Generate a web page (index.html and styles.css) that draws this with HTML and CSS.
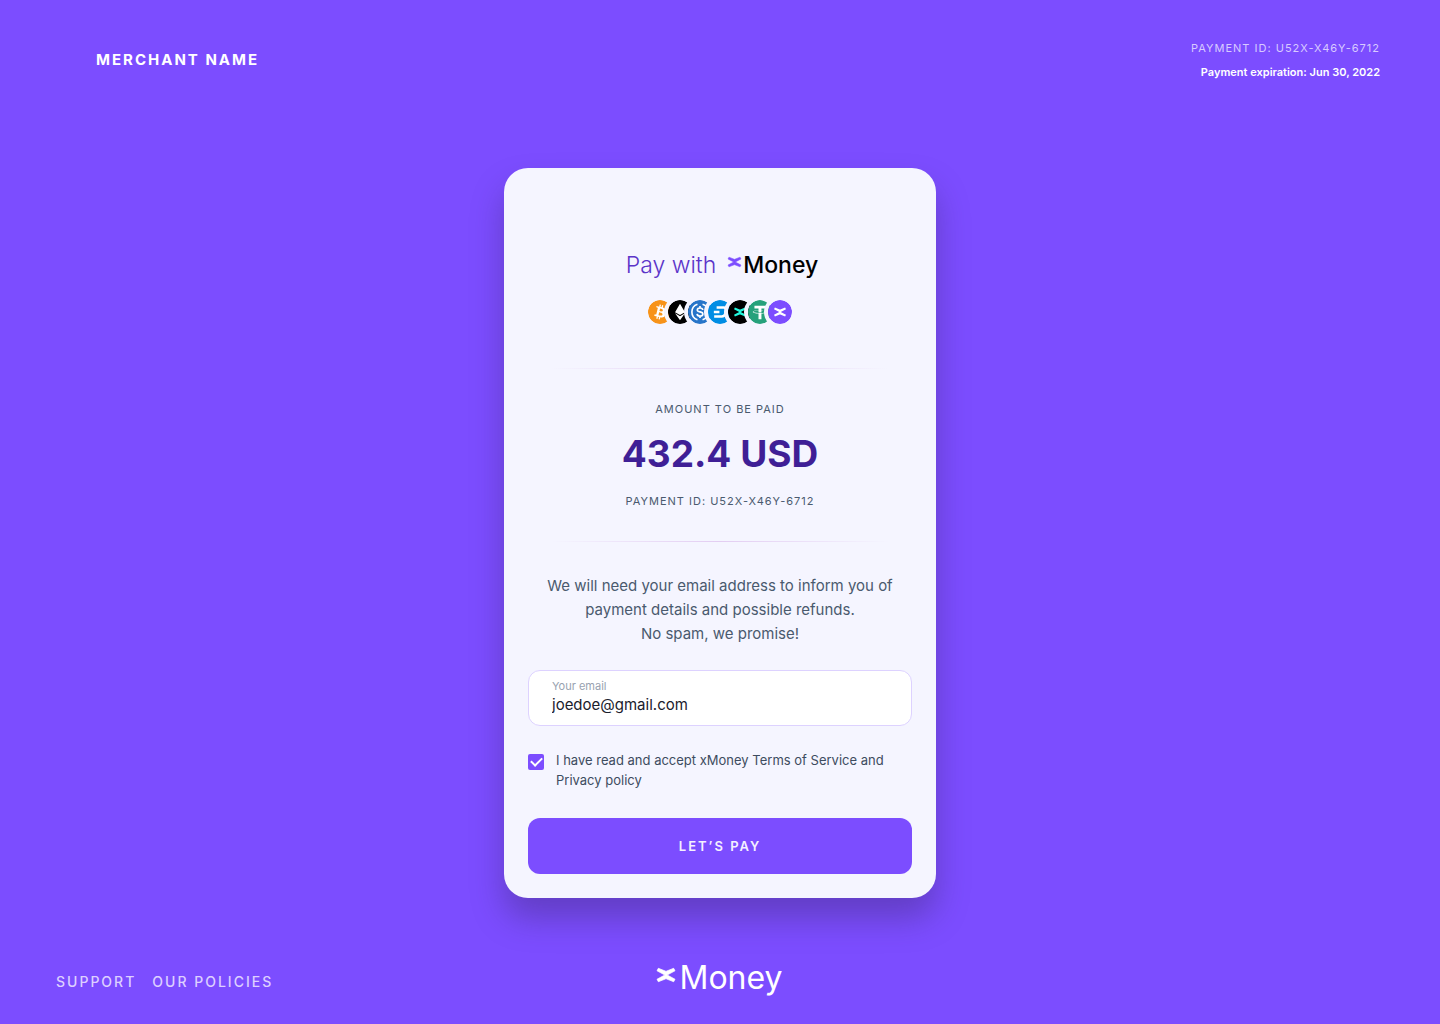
FILE: index.html
```html
<!DOCTYPE html>
<html lang="en">
<head>
<meta charset="utf-8">
<meta name="viewport" content="width=device-width, initial-scale=1">
<title>Pay with xMoney</title>
<link rel="stylesheet" href="styles.css">
</head>
<body>
<svg class="defs" aria-hidden="true">
  <symbol id="x-mark" viewBox="0 38 300 225">
    <path d="M169.8 150.7 300 80.2 278.1 38.8 155.7 86.8a15.1 15.1 0 0 1-11.1 0L22.2 38.8.3 80.2 130.5 150.7.3 221.2l21.9 41.4 122.4-48a15.1 15.1 0 0 1 11.1 0l122.4 48 21.9-41.4z"/>
  </symbol>
</svg>
<header class="header">
  <p class="merchant">MERCHANT NAME</p>
  <div class="meta">
    <p class="meta-id">PAYMENT ID: U52X-X46Y-6712</p>
    <p class="meta-expiry">Payment expiration: Jun 30, 2022</p>
  </div>
</header>

<main class="main">
  <form class="card">
    <h1 class="title">
      <span>Pay with</span>
      <span class="logo"><svg class="logo-mark"><use href="#x-mark"/></svg><span>Money</span></span>
    </h1>
    <ul class="coins">
      <li><svg class="coin" viewBox="0 0 32 32" role="img" aria-label="Bitcoin"><circle cx="16" cy="16" r="16" fill="#f7931a"/><path fill="#fff" d="M23.189 14.02c.314-2.096-1.283-3.223-3.465-3.975l.708-2.84-1.728-.43-.69 2.765c-.454-.114-.92-.22-1.385-.326l.695-2.783L15.596 6l-.708 2.839c-.376-.086-.746-.17-1.104-.26l.002-.009-2.384-.595-.46 1.846s1.283.294 1.256.312c.7.175.826.638.805 1.006l-.806 3.235c.048.012.11.03.18.057l-.183-.045-1.13 4.532c-.086.212-.303.531-.793.41.018.025-1.256-.313-1.256-.313l-.858 1.978 2.25.561c.418.105.828.215 1.231.318l-.715 2.872 1.727.43.708-2.84c.472.127.93.245 1.378.357l-.706 2.828 1.728.43.715-2.866c2.948.558 5.164.333 6.097-2.333.752-2.146-.037-3.385-1.588-4.192 1.13-.26 1.98-1.003 2.207-2.538zm-3.95 5.538c-.533 2.147-4.148.986-5.32.695l.95-3.805c1.172.293 4.929.872 4.37 3.11zm.535-5.569c-.487 1.953-3.495.96-4.47.717l.86-3.45c.975.243 4.118.696 3.61 2.733z"/></svg></li>
      <li><svg class="coin" viewBox="0 0 32 32" role="img" aria-label="Ethereum"><circle cx="16" cy="16" r="16"/><path fill="#fff" d="M16 5l-6.6 11.2L16 20l6.6-3.8zM16 21.5l-6.6-3.9L16 27l6.6-9.4z"/></svg></li>
      <li><svg class="coin" viewBox="0 0 32 32" role="img" aria-label="USD Coin"><circle cx="16" cy="16" r="16" fill="#2775c9"/><g fill="none" stroke="#fff" stroke-width="2.2"><path d="M12.6 5.6a11 11 0 0 0 0 20.8M19.4 5.6a11 11 0 0 1 0 20.8"/><path d="M19.7 13.3c-.2-1.9-1.6-2.7-3.7-2.7-2.2 0-3.6 1-3.6 2.6 0 3.8 7.4 1.6 7.4 5.5 0 1.7-1.5 2.7-3.8 2.7-2.3 0-3.8-1-3.9-2.9M16 8v3M16 21v3"/></g></svg></li>
      <li><svg class="coin" viewBox="0 0 32 32" role="img" aria-label="Dash"><circle cx="16" cy="16" r="16" fill="#008de4"/><path fill="none" stroke="#fff" stroke-width="3.4" stroke-linejoin="round" d="M11.5 10h9.3c3 0 4.1 1.6 3.4 4.2l-1 3.8c-.8 2.7-2.2 4-5 4H8.2M7.8 16h7.4"/></svg></li>
      <li><svg class="coin" viewBox="0 0 32 32" role="img" aria-label="MultiversX"><circle cx="16" cy="16" r="16"/><use href="#x-mark" x="8" y="10" width="16" height="12" fill="#23f7dd"/></svg></li>
      <li><svg class="coin" viewBox="0 0 32 32" role="img" aria-label="Tether"><circle cx="16" cy="16" r="16" fill="#26a17b"/><path fill="#fff" d="M17.922 17.383v-.002c-.11.008-.677.042-1.942.042-1.01 0-1.721-.03-1.971-.042v.003c-3.888-.171-6.79-.848-6.79-1.658 0-.809 2.902-1.486 6.79-1.66v2.644c.254.018.982.061 1.988.061 1.207 0 1.812-.05 1.925-.06v-2.643c3.88.173 6.775.85 6.775 1.658 0 .81-2.895 1.485-6.775 1.657m0-3.59v-2.366h5.414V7.819H8.595v3.608h5.414v2.365c-4.4.202-7.709 1.074-7.709 2.118 0 1.044 3.309 1.915 7.709 2.118v7.582h3.913v-7.584c4.393-.202 7.694-1.073 7.694-2.116 0-1.043-3.301-1.914-7.694-2.117"/></svg></li>
      <li><svg class="coin" viewBox="0 0 32 32" role="img" aria-label="xMoney"><circle cx="16" cy="16" r="16" fill="#7c4dff"/><use href="#x-mark" x="8" y="10" width="16" height="12" fill="#fff"/></svg></li>
    </ul>

    <section class="summary">
      <p class="label">AMOUNT TO BE PAID</p>
      <p class="amount">432.4 USD</p>
      <p class="label">PAYMENT ID: U52X-X46Y-6712</p>
    </section>

    <p class="note">We will need your email address to inform you of<br>payment details and possible refunds.<br>No spam, we promise!</p>

    <div class="field">
      <label for="email">Your email</label>
      <input id="email" type="email" value="joedoe@gmail.com">
    </div>

    <div class="consent">
      <input id="terms" type="checkbox" checked>
      <label for="terms">I have read and accept xMoney Terms of Service and<br>Privacy policy</label>
    </div>

    <button class="pay" type="button">LET’S PAY</button>
  </form>
</main>

<footer class="footer">
  <nav class="links">
    <a href="#support">SUPPORT</a>
    <a href="#policies">OUR POLICIES</a>
  </nav>
  <div class="logo logo-large"><svg class="logo-mark"><use href="#x-mark"/></svg><span>Money</span></div>
</footer>
</body>
</html>
```
FILE: styles.css
```css
* {
  box-sizing: border-box;
  margin: 0;
}

body {
  display: flex;
  flex-direction: column;
  min-height: 100vh;
  background: #7c4dff;
  color: #fff;
  font-family: Inter, "Liberation Sans", sans-serif;
}

.defs {
  display: none;
}

#x-mark {
  overflow: visible;
}

.header {
  display: flex;
  justify-content: space-between;
  align-items: center;
  padding: 36px 60px 0 96px;
}

.merchant {
  font-size: 15px;
  line-height: 24px;
  font-weight: 700;
  letter-spacing: 2px;
}

.meta {
  text-align: right;
  font-size: 11px;
  line-height: 24px;
}

.meta-id {
  color: #d8caff;
  letter-spacing: 1px;
}

.meta-expiry {
  font-weight: 600;
}

.main {
  flex: 1;
  display: flex;
  justify-content: center;
  align-items: flex-start;
  padding: 84px 24px 62px;
}

.card {
  display: flex;
  flex-direction: column;
  width: 100%;
  max-width: 432px;
  padding: 81px 24px 24px;
  border-radius: 24px;
  background: #f5f5ff;
  box-shadow: 0 20px 32px rgba(60, 40, 110, 0.4);
  color: #4a5a6e;
  text-align: center;
}

.title {
  display: flex;
  justify-content: center;
  align-items: center;
  gap: 12px;
  padding-left: 4px;
  color: #5b34c9;
  font-size: 23px;
  line-height: 32px;
  font-weight: 300;
}

.logo {
  display: flex;
  align-items: flex-start;
  gap: 2px;
  color: #000;
  font-size: 23px;
  line-height: 32px;
  font-weight: 500;
}

.logo-mark {
  width: 13px;
  height: 10px;
  margin-top: 8px;
  overflow: visible;
  fill: #7c4dff;
  stroke: #7c4dff;
  stroke-width: 12px;
}

.logo-large {
  gap: 4px;
  color: #fff;
  font-size: 32px;
  line-height: 36px;
  font-weight: 400;
}

.logo-large .logo-mark {
  width: 18px;
  height: 14px;
  fill: #fff;
  stroke: #fff;
}

.coins {
  display: flex;
  justify-content: center;
  margin-top: 19px;
  padding: 0;
  list-style: none;
}

.coins li + li {
  margin-left: -4px;
}

.coin {
  display: block;
  width: 24px;
  height: 24px;
  border-radius: 50%;
  box-shadow: 0 0 0 4px #f5f5ff;
}

.summary {
  margin-top: 44px;
}

.summary::before,
.summary::after {
  content: "";
  display: block;
  height: 1px;
  background: linear-gradient(90deg, transparent 6%, #e3cdf2 50%, transparent 94%);
}

.summary::before {
  margin-bottom: 28px;
}

.summary::after {
  margin-top: 28px;
}

.label {
  font-size: 11px;
  line-height: 24px;
  letter-spacing: 1px;
}

.amount {
  margin: 5px 0 7px;
  color: #3f1f96;
  font-size: 37px;
  line-height: 56px;
  font-weight: 700;
}

.note {
  margin-top: 32px;
  font-size: 15px;
  line-height: 24px;
}

.field {
  display: flex;
  flex-direction: column;
  height: 56px;
  margin-top: 24px;
  padding: 7px 23px;
  border: 1px solid #ddd2ff;
  border-radius: 12px;
  background: #fff;
  text-align: left;
}

.field label {
  color: #98a2b0;
  font-size: 11px;
  line-height: 16px;
}

.field input {
  height: 20px;
  margin: 0 -2px;
  padding: 0 2px;
  border: 0;
  outline: 0;
  background: transparent;
  color: #1a202c;
  font: inherit;
  font-size: 15px;
}

.consent {
  display: flex;
  gap: 12px;
  margin-top: 24px;
  color: #3d4c60;
  font-size: 13px;
  line-height: 20px;
  text-align: left;
}

.consent input {
  appearance: none;
  display: grid;
  place-items: center;
  flex: none;
  width: 16px;
  height: 16px;
  margin-top: 4px;
  border-radius: 2px;
  background: #7c4dff;
}

.consent input:checked::before {
  content: "";
  width: 5px;
  height: 9px;
  margin-bottom: 3px;
  border: solid #fff;
  border-width: 0 2px 2px 0;
  transform: rotate(45deg);
}

.pay {
  height: 56px;
  margin-top: 28px;
  border: 0;
  border-radius: 12px;
  background: #7c4dff;
  color: #f4f0ff;
  font: inherit;
  font-size: 13px;
  font-weight: 600;
  letter-spacing: 2px;
}

.footer {
  display: grid;
  grid-template-columns: 1fr auto 1fr;
  align-items: start;
  padding: 0 56px 20px;
}

.links {
  display: flex;
  gap: 16px;
}

.links a {
  color: #ddd0ff;
  font-size: 14px;
  line-height: 44px;
  font-weight: 500;
  letter-spacing: 2px;
  text-decoration: none;
}
```
